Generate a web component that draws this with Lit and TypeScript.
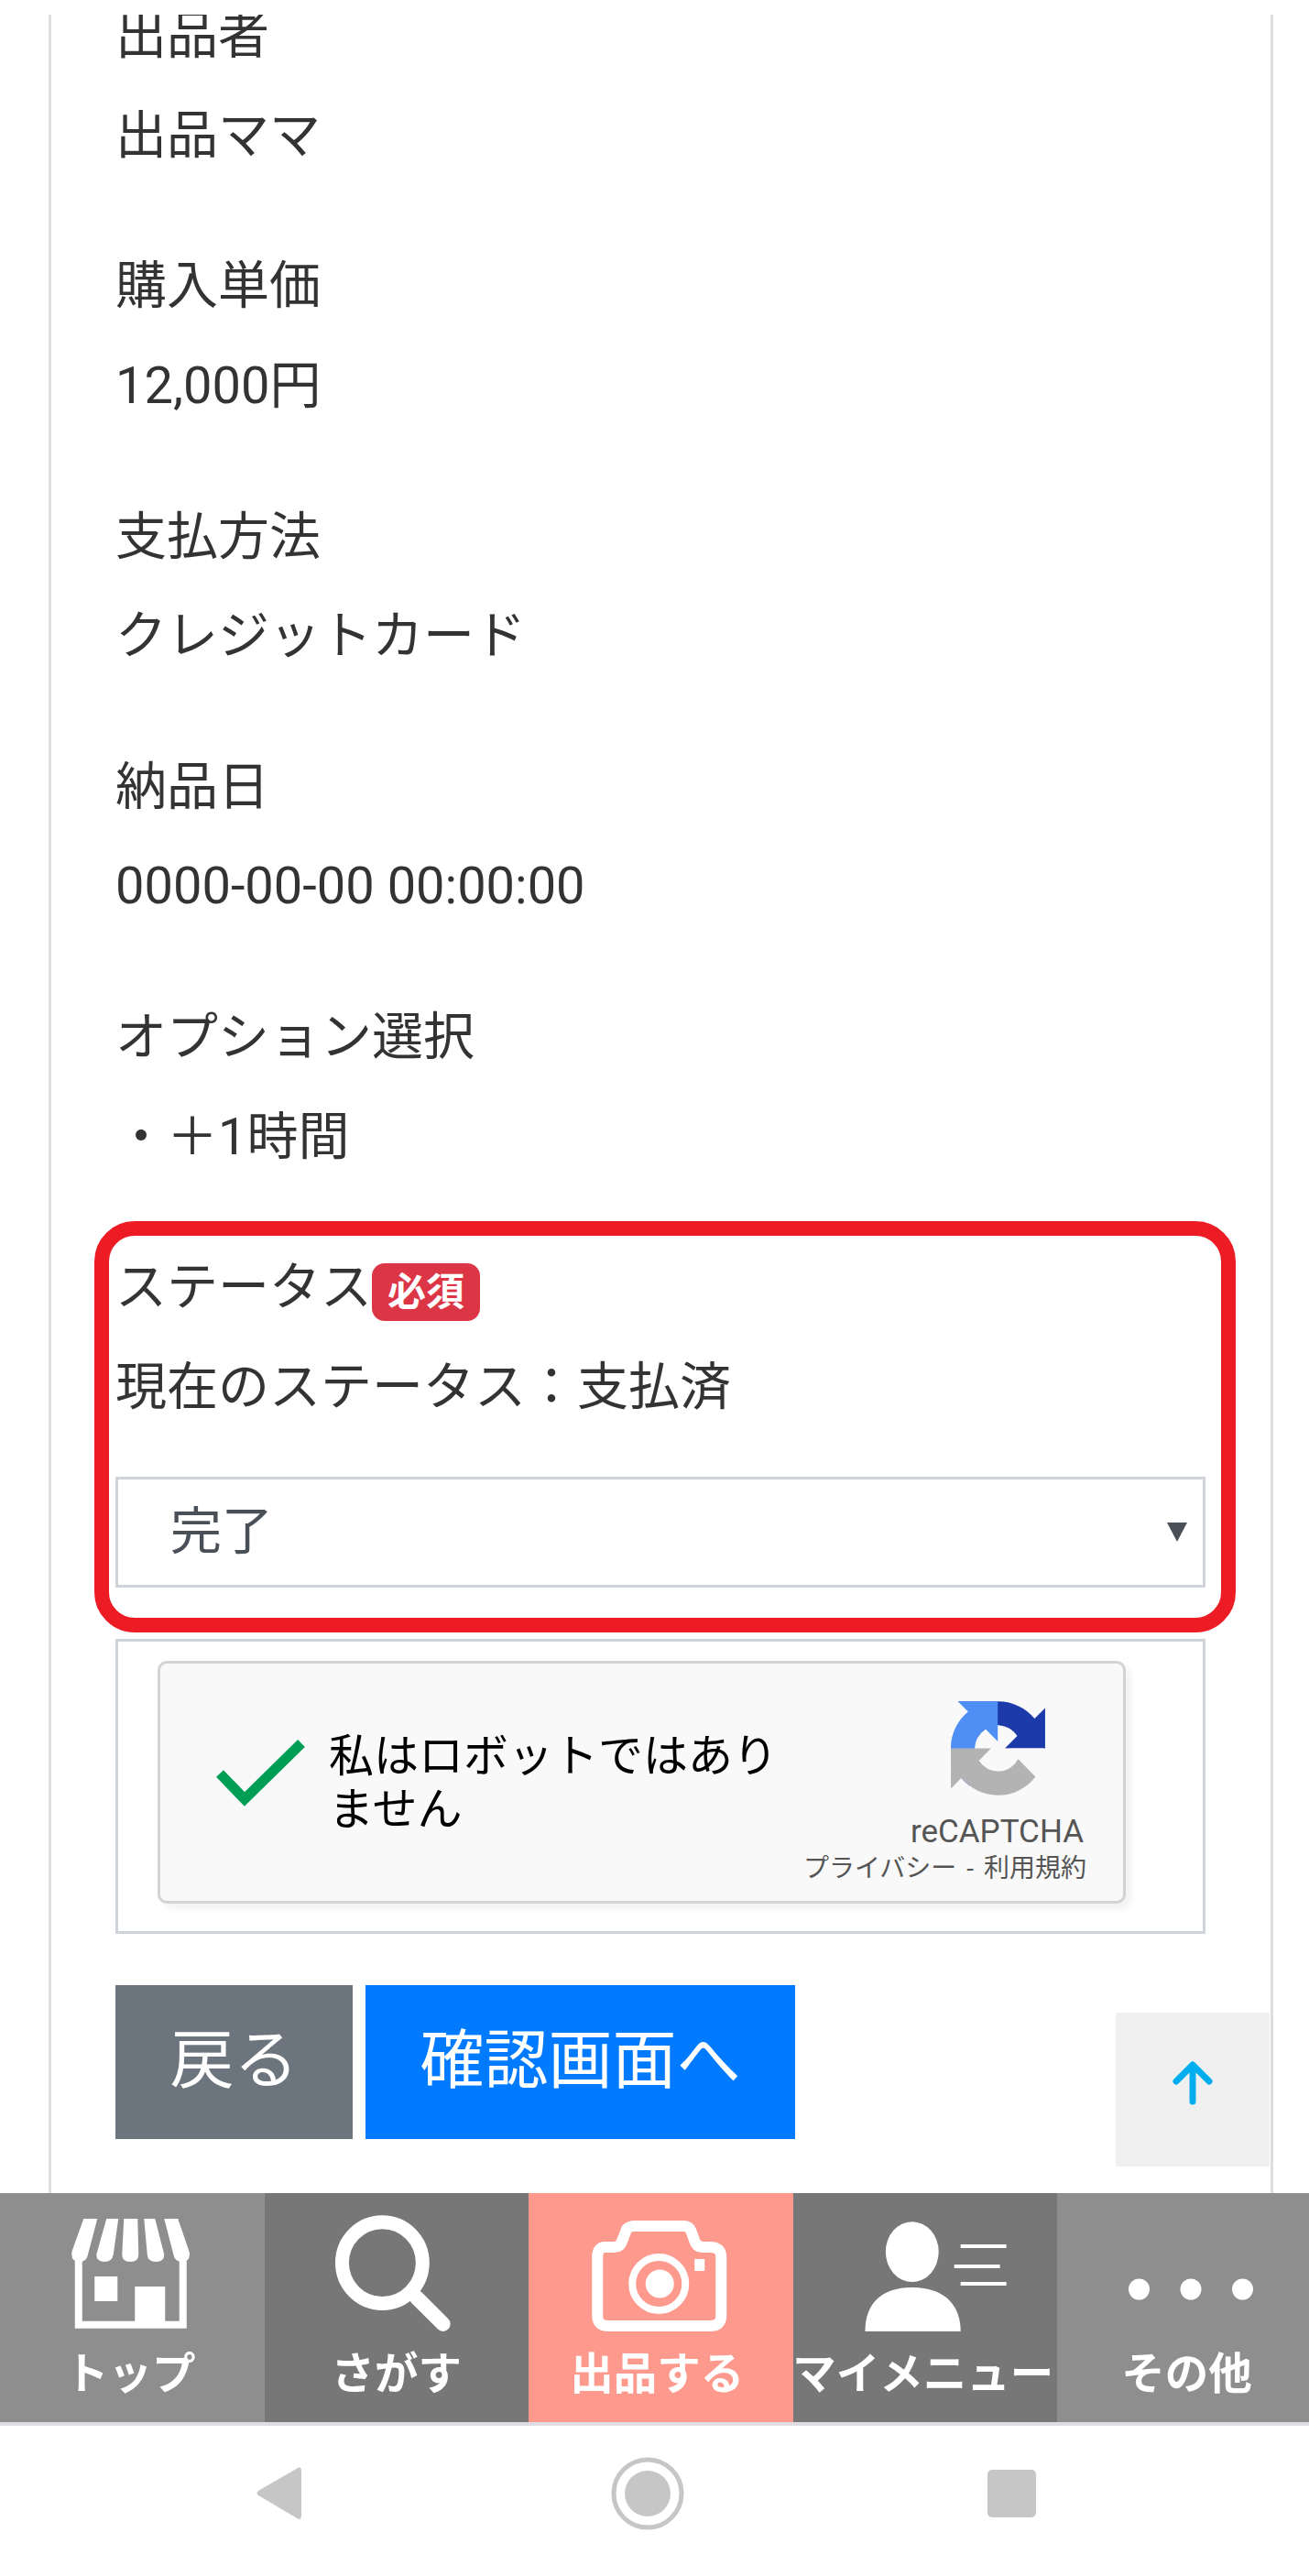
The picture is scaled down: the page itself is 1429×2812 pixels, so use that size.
import { LitElement, html, css, svg } from "lit";
import { customElement } from "lit/decorators.js";

const rows = [
  ["出品者", "出品ママ"],
  ["購入単価", "12,000円"],
  ["支払方法", "クレジットカード"],
  ["納品日", "0000-00-00 00:00:00"],
  ["オプション選択", "・＋1時間"],
];

const shop = svg`<svg class="ico" viewBox="0 0 288 250" width="288" height="250" fill="#fff">
  <path d="M91 28H106L95.500 68Q94 75 87 75Q78 75 78 67Q78 65 78.500 63Z"/>
  <path d="M116 28H129L123.500 67Q122 75 114 75Q105 75 105 67Z"/>
  <path d="M135 28H150L151 67Q151 75 142 75Q133 75 133 67Z"/>
  <path d="M157 28H169L179 67Q179 75 170 75Q161 75 160.500 67Z"/>
  <path d="M179 28H194L206 63Q207 66 206.700 67Q206.700 75 198 75Q191 75 189.400 68Z"/>
  <path d="M85.500 70V143.700H199.500V70" fill="none" stroke="#fff" stroke-width="8"/>
  <rect x="103" y="91" width="25" height="27"/>
  <rect x="147" y="102" width="33" height="38"/>
</svg>`;

const search = svg`<svg class="ico" viewBox="288 0 289 250" width="289" height="250" fill="none" stroke="#fff">
  <ellipse cx="416.600" cy="76" rx="44" ry="44.500" stroke-width="15"/>
  <path d="M454 114L483 143" stroke-width="16" stroke-linecap="round"/>
</svg>`;

const camera = svg`<svg class="ico" viewBox="577 0 288 250" width="288" height="250" fill="none" stroke="#fff">
  <path d="M660 59H670Q677 59 679 52L684 39Q687 36 693 36H746Q752 36 754 41L758 52Q760 59 767 59H775Q787 59 787 70V134Q787 145 775 145H664Q652 145 652 134V70Q652 59 660 59Z" stroke-width="12" stroke-linejoin="round"/>
  <circle cx="719" cy="99" r="29" stroke-width="8"/>
  <circle cx="720" cy="99" r="15.500" fill="#fff" stroke="none"/>
  <rect x="758" y="72" width="11" height="13" fill="#fff" stroke="none"/>
</svg>`;

const person = svg`<svg class="ico" viewBox="865 0 289 250" width="289" height="250" fill="#fff">
  <ellipse cx="995" cy="64" rx="29" ry="33"/>
  <path d="M943.600 151C943.600 122 960 103 995 103C1030 103 1048 122 1048 151Z"/>
  <path d="M1048 58H1098M1041 80H1091M1048 99H1098" stroke="#fff" stroke-width="4" fill="none"/>
</svg>`;

const dots = svg`<svg class="ico" viewBox="1154 0 275 250" width="275" height="250" fill="#fff">
  <circle cx="1243.500" cy="105" r="11.500"/>
  <circle cx="1300" cy="105" r="11.500"/>
  <circle cx="1356.500" cy="105" r="11.500"/>
</svg>`;

const nav = [
  { label: "トップ", icon: shop, cls: "light w288", lbl: "nudge-l2" },
  { label: "さがす", icon: search, cls: "dark w289", lbl: "" },
  { label: "出品する", icon: camera, cls: "salmon w288", lbl: "nudge-l4" },
  { label: "マイメニュー", icon: person, cls: "dark w289", lbl: "nudge-l2" },
  { label: "その他", icon: dots, cls: "light w275", lbl: "nudge-r4" },
];

@customElement("app-root")
export class AppRoot extends LitElement {
  static styles = css`
    :host {
      display: block;
      width: 1429px;
      height: 2812px;
      overflow: hidden;
      background: #fff;
      font-family: Roboto, "Noto Sans CJK JP", sans-serif;
      color: #333;
    }
    .viewport {
      position: relative;
      height: 2394px;
      overflow: hidden;
    }
    .top-band {
      position: absolute;
      left: 0;
      right: 0;
      top: 0;
      height: 16px;
      background: #fff;
      z-index: 3;
    }
    .card {
      box-sizing: border-box;
      margin: -3px 0 0 53px;
      width: 1337px;
      height: 2397px;
      border-left: 3px solid #dedede;
      border-right: 3px solid #dedede;
      padding: 0 71px 0 70px;
      font-size: 56px;
      line-height: 84px;
    }
    .label {
      margin-bottom: 24.5px;
      display: flex;
      align-items: flex-start;
    }
    .value {
      margin-bottom: 80.8px;
    }
    .value.status {
      margin-bottom: 56px;
    }
    .badge {
      box-sizing: border-box;
      display: inline-block;
      width: 118px;
      height: 63px;
      margin-top: 16px;
      background: #dc3545;
      color: #fff;
      border-radius: 14px;
      font-size: 42px;
      line-height: 63px;
      font-weight: 700;
      text-align: center;
    }
    .select {
      box-sizing: border-box;
      height: 121px;
      border: 3px solid #ced4da;
      display: flex;
      align-items: center;
      justify-content: space-between;
      padding: 0 17px 0 57px;
      color: #495057;
      margin-bottom: 56px;
    }
    .select svg {
      display: block;
    }
    .captcha-wrap {
      box-sizing: border-box;
      height: 322px;
      border: 3px solid #ced4da;
      padding: 21px 0 0 43px;
      margin-bottom: 56px;
    }
    .captcha {
      box-sizing: border-box;
      position: relative;
      display: flex;
      width: 1057px;
      height: 265px;
      background: #f9f9f9;
      border: 3px solid #d3d3d3;
      border-radius: 10px;
      box-shadow: 6px 6px 6px rgba(0, 0, 0, 0.05);
      color: #000;
    }
    .check {
      display: block;
      flex: none;
      margin: 82px 0 0 60px;
    }
    .captcha-text {
      width: 532px;
      margin: 73px 0 0 24px;
      font-size: 49px;
      line-height: 58px;
    }
    .brand {
      flex: none;
      margin-left: auto;
      width: 340px;
      padding-right: 40px;
      box-sizing: border-box;
      display: flex;
      flex-direction: column;
      align-items: flex-end;
      color: #555;
      text-align: right;
    }
    .logo {
      display: block;
      margin: 41px 45px 0 0;
    }
    .brand .name {
      font-size: 35px;
      line-height: 40px;
      margin: 20px 3px 0 0;
    }
    .brand .links {
      font-size: 28px;
      line-height: 32px;
      margin-top: 4px;
      white-space: pre;
      word-spacing: 4px;
    }
    .actions {
      display: flex;
      gap: 14px;
    }
    .btn {
      box-sizing: border-box;
      height: 168px;
      padding: 0 59.5px;
      display: flex;
      align-items: center;
      color: #fff;
      font-size: 70px;
      line-height: 105px;
    }
    .btn.back {
      background: #6c757d;
    }
    .btn.next {
      background: #007bff;
    }
    .highlight {
      box-sizing: border-box;
      position: absolute;
      left: 103px;
      top: 1333px;
      width: 1246px;
      height: 449px;
      border: 16px solid #ed1c24;
      border-radius: 44px;
      pointer-events: none;
    }
    .to-top {
      position: absolute;
      left: 1218px;
      top: 2197px;
      width: 168px;
      height: 168px;
      background: #f0f0f0;
    }
    .to-top svg {
      display: block;
    }
    .nav {
      display: flex;
      height: 250px;
      border-bottom: 4px solid #dddde3;
    }
    .tab {
      position: relative;
      flex: none;
      height: 250px;
      color: #fff;
      text-align: center;
      font-size: 47.5px;
      line-height: 50px;
      font-weight: 700;
    }
    .w288 { width: 288.5px; }
    .w289 { width: 288.5px; }
    .w275 { width: 275px; }
    .light { background: #8e8e8e; }
    .dark { background: #777777; }
    .salmon { background: #fd998d; }
    .ico {
      display: block;
      position: absolute;
      left: 0;
      top: 0;
      width: 100%;
      height: 250px;
      filter: blur(0.5px);
    }
    .tab-label {
      position: absolute;
      left: 0;
      right: 0;
      top: 173px;
      white-space: nowrap;
      filter: blur(0.7px);
    }
    .nudge-l2 { left: -4px; }
    .nudge-l4 { left: -8px; }
    .nudge-r4 { left: 8px; }
    .sys {
      height: 164px;
      background: #fff;
      display: block;
    }
    .sys svg {
      display: block;
    }
  `;

  render() {
    return html`
      <div class="viewport">
        <div class="top-band"></div>
        <div class="card">
          ${rows.map(
            ([k, v]) => html`<div class="label">${k}</div><div class="value">${v}</div>`
          )}
          <div class="label">ステータス<span class="badge">必須</span></div>
          <div class="value status">現在のステータス：支払済</div>
          <div class="select">
            <span>完了</span>
            <svg width="22" height="21" viewBox="0 0 22 21"><path d="M0 0H22L11 21Z" fill="#495057"/></svg>
          </div>
          <div class="captcha-wrap">
            <div class="captcha">
              <svg class="check" width="100" height="76" viewBox="0 0 100 76">
                <path d="M5 38L32 66L94 5" fill="none" stroke="#009e55" stroke-width="11"/>
              </svg>
              <div class="captcha-text">私はロボットではありません</div>
              <div class="brand">
                <svg class="logo" width="103" height="103" viewBox="0 0 64 64">
                  <path d="M64 31.955l-.033-1.37V4.687l-7.16 7.16C50.948 4.674 42.033.089 32.05.089c-10.4 0-19.622 4.96-25.458 12.64l11.736 11.86a15.55 15.55 0 0 1 4.754-5.334c2.05-1.6 4.952-2.906 8.968-2.906.485 0 .86.057 1.135.163 4.976.393 9.288 3.14 11.828 7.124l-8.307 8.307c10.522-.04 22.4-.066 27.295.005" fill="#1c3aa9"/>
                  <path d="M31.862.001l-1.37.033H4.594l7.16 7.16C4.58 13.053-.006 21.968-.006 31.95c0 10.4 4.96 19.622 12.64 25.458l11.86-11.736a15.55 15.55 0 0 1-5.334-4.754c-1.6-2.05-2.906-4.952-2.906-8.968 0-.485.057-.86.163-1.135.393-4.976 3.14-9.288 7.124-11.828l8.307 8.307c-.04-10.522-.066-22.4.005-27.295" fill="#4f8ff5"/>
                  <path d="M.001 32l.033 1.37v25.898l7.16-7.16c5.86 7.173 14.774 11.76 24.76 11.76 10.4 0 19.622-4.96 25.458-12.64l-11.736-11.86a15.55 15.55 0 0 1-4.754 5.334c-2.05 1.6-4.952 2.906-8.968 2.906-.485 0-.86-.057-1.135-.163-4.976-.393-9.288-3.14-11.828-7.124l8.307-8.307c-10.522.04-22.4.066-27.295-.005" fill="#b3b3b3"/>
                </svg>
                <div class="name">reCAPTCHA</div>
                <div class="links">プライバシー - 利用規約</div>
              </div>
            </div>
          </div>
          <div class="actions">
            <div class="btn back">戻る</div>
            <div class="btn next">確認画面へ</div>
          </div>
        </div>
        <div class="highlight"></div>
        <div class="to-top">
          <svg width="168" height="168" viewBox="0 0 168 168" fill="none" stroke="#00aeef" stroke-width="7" stroke-linecap="round" stroke-linejoin="round">
            <path d="M84 97V60M66 75L84 57L102 75"/>
          </svg>
        </div>
      </div>
      <div class="nav">
        ${nav.map(
          (n) => html`<div class="tab ${n.cls}">${n.icon}<div class="tab-label ${n.lbl}">${n.label}</div></div>`
        )}
      </div>
      <div class="sys">
        <svg width="1429" height="164" viewBox="0 2648 1429 164" fill="#c6c6c6">
          <path d="M326 2693.500Q329 2693 329 2697V2746Q329 2750 326 2750L282 2724Q279 2721.500 282 2719Z"/>
          <circle cx="707" cy="2722" r="37" fill="none" stroke="#c6c6c6" stroke-width="5"/>
          <circle cx="707" cy="2722" r="25"/>
          <rect x="1078" y="2696" width="53" height="52" rx="5"/>
        </svg>
      </div>
    `;
  }
}
